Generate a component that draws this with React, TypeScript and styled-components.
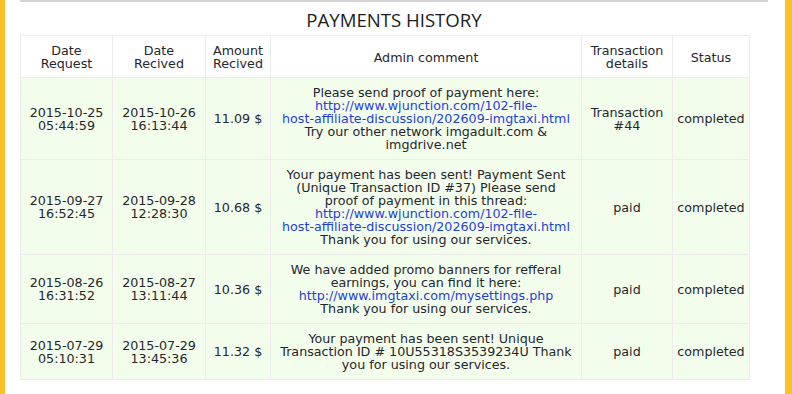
import React from "react";
import styled, { createGlobalStyle } from "styled-components";

const Global = createGlobalStyle`
  html, body { margin: 0; padding: 0; background: #ffffff; }
  body { font-family: "DejaVu Sans", Verdana, sans-serif; }
`;

const Page = styled.div`
  display: flex;
  width: 792px;
  height: 394px;
  overflow: hidden;
  background: #ffffff;
`;

const Stripe = styled.div<{ $w: number }>`
  flex: 0 0 ${(p) => p.$w}px;
  background: #fcc02a;
`;

const Main = styled.main`
  flex: 0 0 748px;
  margin-left: 15px;
  margin-right: 17px;
  border-top: 2px solid #d4d4d4;
  display: flex;
  flex-direction: column;
`;

const Title = styled.h2`
  margin: 0;
  height: 33px;
  display: flex;
  align-items: center;
  justify-content: center;
  padding-top: 2px;
  box-sizing: border-box;
  font-family: "Open Sans", "Noto Sans", sans-serif;
  font-weight: 400;
  font-size: 18.6px;
  color: #1c1c24;
`;

const Table = styled.table`
  width: 729px;
  border-collapse: collapse;
  table-layout: fixed;
  font-family: "DejaVu Sans", Verdana, sans-serif;
  font-size: 12.7px;
  line-height: 13px;
  color: #26262e;
`;

const Th = styled.th`
  font-weight: 400;
  text-align: center;
  vertical-align: middle;
  border: 1px solid #ececec;
  padding: 8px 3px 7px;
  background: #ffffff;
`;

const Row = styled.tr`
  background: #f3fdeb;
`;

const Td = styled.td`
  text-align: center;
  vertical-align: middle;
  border: 1px solid #ececec;
  padding: 8px 3px;
`;

const Line = styled.div`
  white-space: nowrap;
`;

const Link = styled.a`
  display: block;
  color: #1f3fdc;
  text-decoration: none;
  white-space: nowrap;
`;

type Part = { text: string; href?: string };

type Payment = {
  requested: [string, string];
  received: [string, string];
  amount: string;
  comment: Part[];
  details: string[];
  status: string;
};

const thread = "http://www.wjunction.com/102-file-host-affiliate-discussion/202609-imgtaxi.html";

const payments: Payment[] = [
  {
    requested: ["2015-10-25", "05:44:59"],
    received: ["2015-10-26", "16:13:44"],
    amount: "11.09 $",
    comment: [
      { text: "Please send proof of payment here:" },
      { text: "http://www.wjunction.com/102-file-", href: thread },
      { text: "host-affiliate-discussion/202609-imgtaxi.html", href: thread },
      { text: "Try our other network imgadult.com &" },
      { text: "imgdrive.net" },
    ],
    details: ["Transaction", "#44"],
    status: "completed",
  },
  {
    requested: ["2015-09-27", "16:52:45"],
    received: ["2015-09-28", "12:28:30"],
    amount: "10.68 $",
    comment: [
      { text: "Your payment has been sent! Payment Sent" },
      { text: "(Unique Transaction ID #37) Please send" },
      { text: "proof of payment in this thread:" },
      { text: "http://www.wjunction.com/102-file-", href: thread },
      { text: "host-affiliate-discussion/202609-imgtaxi.html", href: thread },
      { text: "Thank you for using our services." },
    ],
    details: ["paid"],
    status: "completed",
  },
  {
    requested: ["2015-08-26", "16:31:52"],
    received: ["2015-08-27", "13:11:44"],
    amount: "10.36 $",
    comment: [
      { text: "We have added promo banners for refferal" },
      { text: "earnings, you can find it here:" },
      { text: "http://www.imgtaxi.com/mysettings.php", href: "http://www.imgtaxi.com/mysettings.php" },
      { text: "Thank you for using our services." },
    ],
    details: ["paid"],
    status: "completed",
  },
  {
    requested: ["2015-07-29", "05:10:31"],
    received: ["2015-07-29", "13:45:36"],
    amount: "11.32 $",
    comment: [
      { text: "Your payment has been sent! Unique" },
      { text: "Transaction ID # 10U55318S3539234U Thank" },
      { text: "you for using our services." },
    ],
    details: ["paid"],
    status: "completed",
  },
];

const widths = [92, 93, 65, 311, 91, 77];

const Lines = ({ items }: { items: string[] }) => (
  <>
    {items.map((t, i) => (
      <Line key={i}>{t}</Line>
    ))}
  </>
);

export default function App() {
  return (
    <Page>
      <Global />
      <Stripe $w={5} />
      <Main>
        <Title>PAYMENTS HISTORY</Title>
        <Table>
          <colgroup>
            {widths.map((w, i) => (
              <col key={i} style={{ width: w }} />
            ))}
          </colgroup>
          <thead>
            <tr>
              <Th><Lines items={["Date", "Request"]} /></Th>
              <Th><Lines items={["Date", "Recived"]} /></Th>
              <Th><Lines items={["Amount", "Recived"]} /></Th>
              <Th>Admin comment</Th>
              <Th><Lines items={["Transaction", "details"]} /></Th>
              <Th>Status</Th>
            </tr>
          </thead>
          <tbody>
            {payments.map((p, i) => (
              <Row key={i}>
                <Td><Lines items={p.requested} /></Td>
                <Td><Lines items={p.received} /></Td>
                <Td>{p.amount}</Td>
                <Td>
                  {p.comment.map((c, j) =>
                    c.href ? (
                      <Link key={j} href={c.href}>{c.text}</Link>
                    ) : (
                      <Line key={j}>{c.text}</Line>
                    )
                  )}
                </Td>
                <Td><Lines items={p.details} /></Td>
                <Td>{p.status}</Td>
              </Row>
            ))}
          </tbody>
        </Table>
      </Main>
      <Stripe $w={7} />
    </Page>
  );
}
